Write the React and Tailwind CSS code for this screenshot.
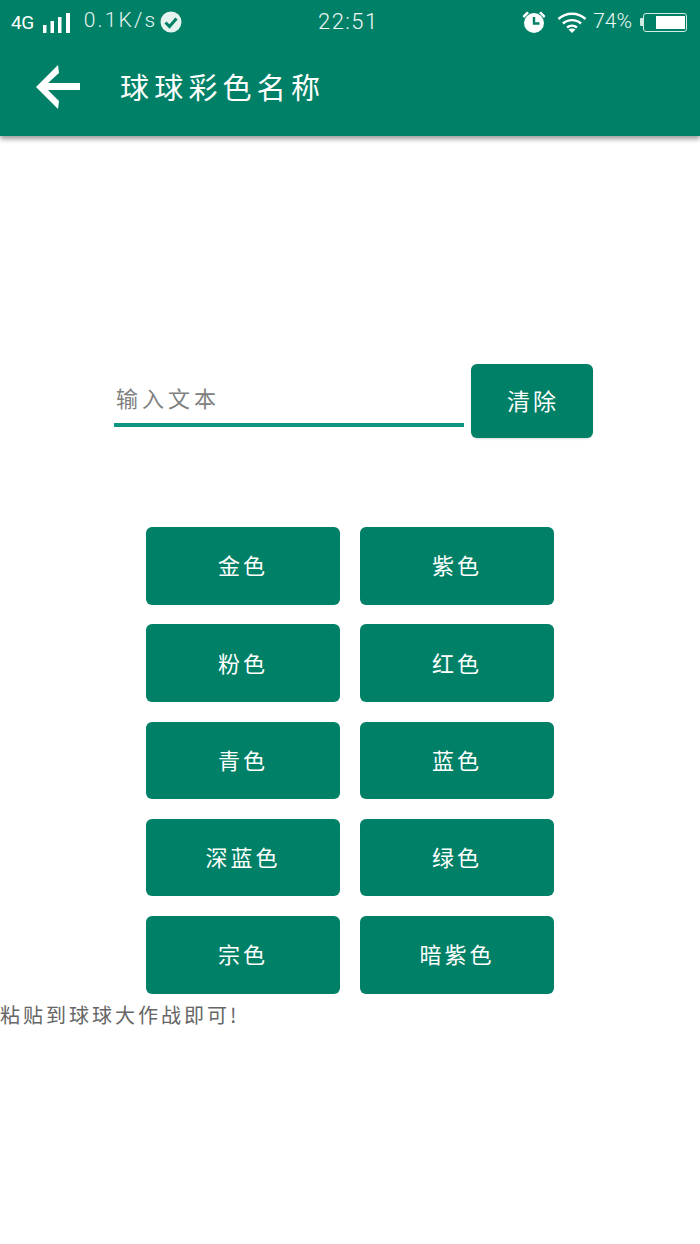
const cjk = "font-['Noto_Sans_CJK_SC','Noto_Sans_CJK_JP',sans-serif]";

const colors = [
  ["金色", "紫色"],
  ["粉色", "红色"],
  ["青色", "蓝色"],
  ["深蓝色", "绿色"],
  ["宗色", "暗紫色"],
];

function ColorButton({ label }) {
  return (
    <button className={`${cjk} flex h-[77.5px] w-[194px] items-center justify-center rounded-[6px] bg-[#008066] pb-[2px] text-[22px] font-normal tracking-[3px] text-white`}>
      {label}
    </button>
  );
}

function StatusBar() {
  return (
    <div className="flex h-[44px] items-center justify-between pl-[11px] pr-[13px] text-white font-['Roboto',sans-serif]">
      <div className="flex items-center">
        <span className="mt-[3px] text-[19px] font-normal tracking-[-0.5px]">4G</span>
        <svg width="28" height="20" viewBox="0 0 28 20" className="ml-[9px] mt-[1px]" fill="white">
          <rect x="0" y="12" width="3.5" height="8" />
          <rect x="7.5" y="8" width="3.5" height="12" />
          <rect x="15" y="4" width="3.5" height="16" />
          <rect x="23" y="0" width="4" height="20" />
        </svg>
        <span className="ml-[13px] mb-[2px] text-[21px] font-light tracking-[2.2px] text-[#e8f5f1]">0.1K/s</span>
        <svg width="22" height="22" viewBox="0 0 22 22" className="ml-[3px]">
          <circle cx="11" cy="11" r="10.5" fill="#e6f4ef" />
          <path d="M5.5 11.5 L9.5 15.5 L16.5 7.5" fill="none" stroke="#008066" strokeWidth="3" />
        </svg>
      </div>
      <span className="mb-[2px] mr-[7px] text-[22px] font-light tracking-[1.4px] text-[#eef8f5]">22:51</span>
      <div className="flex items-center">
        <svg width="26" height="24" viewBox="0 0 26 24" fill="white">
          <circle cx="13" cy="13" r="10" />
          <path d="M1.5 6 L6 1.5 L8 3 L3 8 Z M24.5 6 L20 1.5 L18 3 L23 8 Z" />
          <path d="M13 7 V13.5 H18.5" fill="none" stroke="#008066" strokeWidth="2.4" />
        </svg>
        <svg width="30" height="22" viewBox="0 0 30 22" className="ml-[10px]" fill="none" stroke="white" strokeWidth="2.4">
          <path d="M1.5 8 C9 1 21 1 28.5 8" />
          <path d="M6 12.5 C11 8 19 8 24 12.5" />
          <path d="M10 16.5 C13 14 17 14 20 16.5" />
          <path d="M15 22 L11.5 18.5 C13.5 17 16.5 17 18.5 18.5 Z" fill="white" stroke="none" />
        </svg>
        <span className="ml-[6px] mb-[1px] text-[21px] font-light text-[#eef8f5]">74%</span>
        <div className="ml-[8px] flex items-center">
          <div className="h-[8px] w-[3px] rounded-l-[1px] bg-[#cfe8e0]" />
          <div className="flex h-[19px] w-[44px] items-center justify-end rounded-[3px] border border-[#d5ece5] pr-[1px]">
            <div className="h-[13px] w-[29px] bg-white" />
          </div>
        </div>
      </div>
    </div>
  );
}

export default function App() {
  return (
    <div className="flex h-[1244px] w-[700px] flex-col overflow-hidden bg-white">
      <header className="h-[136px] bg-[#008066] shadow-[0_3px_5px_rgba(0,0,0,0.4)]">
        <StatusBar />
        <div className="flex h-[86px] items-center pl-[36px]">
          <svg width="44" height="44" viewBox="0 0 44 44" fill="white">
            <path d="M22 0 L23 8 L12 18 H44 V25 H12 L23 36 L22 44 L0 22 Z" />
          </svg>
          <h1 className={`${cjk} ml-[40px] text-[29px] font-normal tracking-[5.2px] text-white`}>球球彩色名称</h1>
        </div>
      </header>

      <div className="mt-[228px] flex items-stretch pl-[114px]">
        <div className="flex h-[63px] w-[350px] items-center self-start border-b-[4px] border-[#0f9484] pl-[2px] pt-[7px]">
          <span className={`${cjk} text-[22px] font-normal tracking-[4px] text-[#808080]`}>输入文本</span>
        </div>
        <button className={`${cjk} ml-[7px] flex h-[74px] w-[122px] items-center justify-center rounded-[6px] bg-[#008066] pb-[2px] pl-[2px] text-[23px] font-normal tracking-[3px] text-white shadow-[0_1px_2px_rgba(0,0,0,0.15)]`}>
          清除
        </button>
      </div>

      <div className="mt-[89px] flex flex-col gap-[19.8px] pl-[146px]">
        {colors.map((row) => (
          <div key={row[0]} className="flex gap-[20px]">
            {row.map((c) => (
              <ColorButton key={c} label={c} />
            ))}
          </div>
        ))}
      </div>

      <p className={`${cjk} mt-[6px] text-[20px] leading-[30px] font-normal tracking-[3px] text-[#666666]`}>粘贴到球球大作战即可!</p>
    </div>
  );
}
